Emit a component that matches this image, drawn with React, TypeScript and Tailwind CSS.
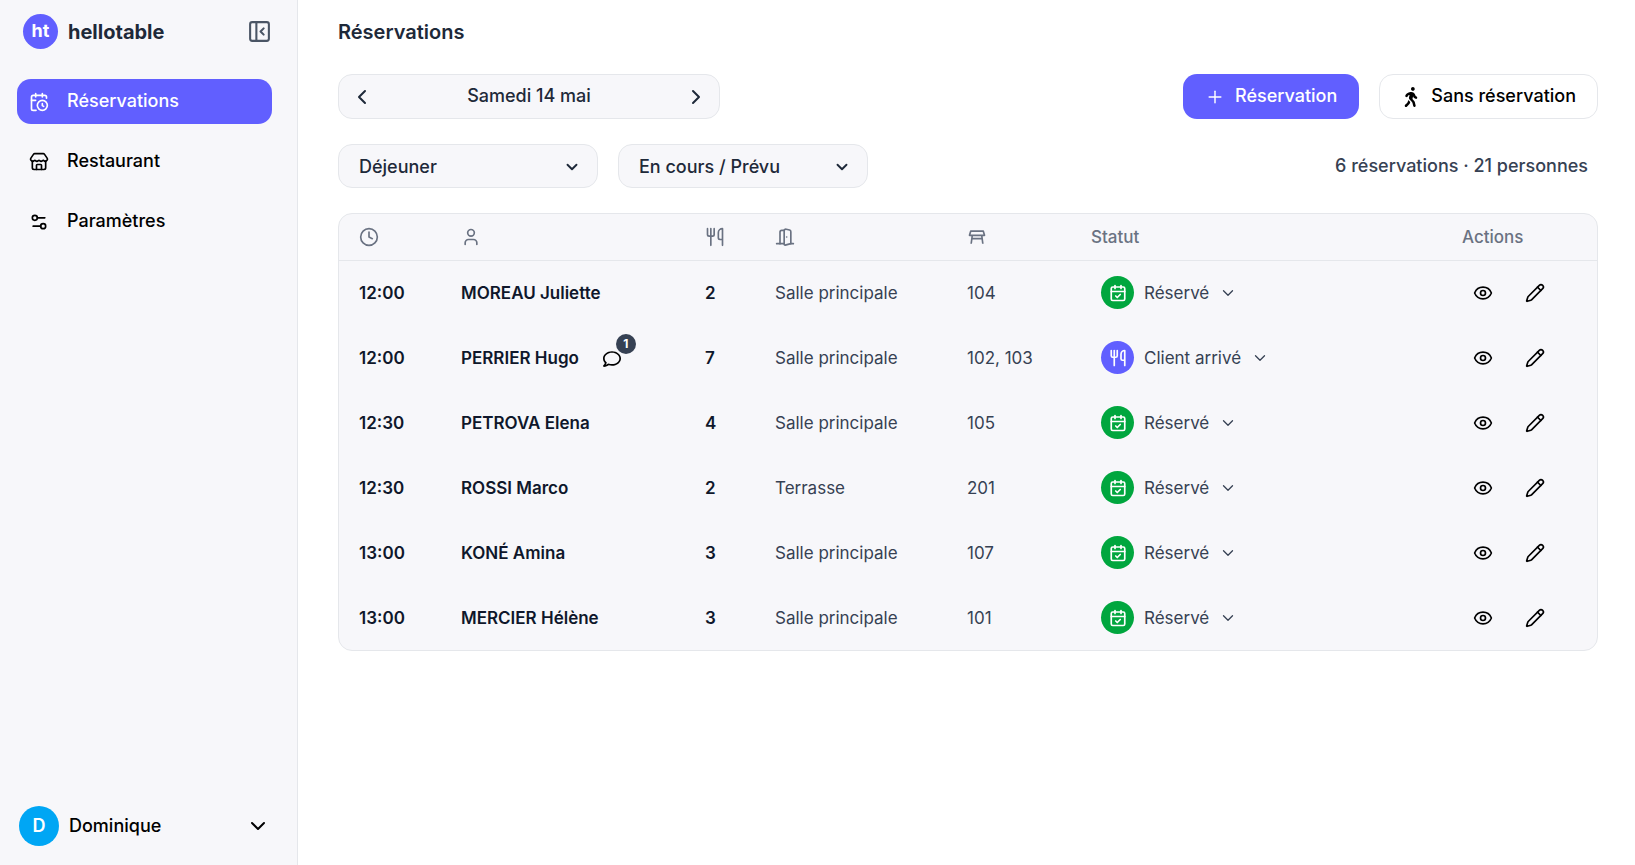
import { useState } from "react";
import {
  CalendarCheck,
  CalendarClock,
  ChevronDown,
  ChevronLeft,
  ChevronRight,
  Clock,
  DoorOpen,
  Eye,
  PanelLeftClose,
  Pencil,
  Plus,
  Settings2,
  Store,
  User,
  Utensils,
} from "lucide-react";
import { FaRegComment, FaWalking } from "react-icons/fa";
import { MdOutlineTableRestaurant } from "react-icons/md";

type Status = "reserved" | "arrived";

interface Reservation {
  id: number;
  time: string;
  name: string;
  guests: number;
  room: string;
  tables: string;
  status: Status;
  comments?: number;
}

const reservations: Reservation[] = [
  { id: 1, time: "12:00", name: "MOREAU Juliette", guests: 2, room: "Salle principale", tables: "104", status: "reserved" },
  { id: 2, time: "12:00", name: "PERRIER Hugo", guests: 7, room: "Salle principale", tables: "102, 103", status: "arrived", comments: 1 },
  { id: 3, time: "12:30", name: "PETROVA Elena", guests: 4, room: "Salle principale", tables: "105", status: "reserved" },
  { id: 4, time: "12:30", name: "ROSSI Marco", guests: 2, room: "Terrasse", tables: "201", status: "reserved" },
  { id: 5, time: "13:00", name: "KONÉ Amina", guests: 3, room: "Salle principale", tables: "107", status: "reserved" },
  { id: 6, time: "13:00", name: "MERCIER Hélène", guests: 3, room: "Salle principale", tables: "101", status: "reserved" },
];

const navItems = [
  { label: "Réservations", icon: CalendarClock },
  { label: "Restaurant", icon: Store },
  { label: "Paramètres", icon: Settings2 },
];

const statuses = {
  reserved: { label: "Réservé", icon: CalendarCheck, color: "bg-green-600" },
  arrived: { label: "Client arrivé", icon: Utensils, color: "bg-[#615fff]" },
};

function Sidebar() {
  const [active, setActive] = useState("Réservations");

  return (
    <aside className="flex w-[298px] shrink-0 flex-col border-r border-gray-200 bg-[#f7f7fa]">
      <div className="flex items-center pt-3.5 pr-[25px] pl-[23px]">
        <span className="flex size-[35px] items-center justify-center rounded-full bg-[#615fff] pb-0.5 text-lg font-bold text-white">
          ht
        </span>
        <span className="ml-2.5 text-xl font-bold text-gray-800">hellotable</span>
        <button type="button" aria-label="Réduire le menu" className="ml-auto text-gray-600">
          <PanelLeftClose size={25} />
        </button>
      </div>

      <nav className="mt-[30px] flex flex-col gap-[15px] pr-[25px] pl-[17px]">
        {navItems.map(({ label, icon: Icon }) => (
          <a
            key={label}
            href="#"
            onClick={() => setActive(label)}
            className={
              "flex h-[45px] items-center gap-[18px] rounded-[14px] px-3 text-lg font-medium " +
              (label === active ? "bg-[#615fff] text-white" : "text-black")
            }
          >
            <Icon size={20} />
            <span className="pb-0.5">{label}</span>
          </a>
        ))}
      </nav>

      <button type="button" className="mt-auto mb-[19px] flex items-center pr-[27px] pl-[19px] text-lg font-medium text-black">
        <span className="flex size-10 items-center justify-center rounded-full bg-sky-500 font-semibold text-white">D</span>
        <span className="ml-2.5">Dominique</span>
        <ChevronDown size={24} className="ml-auto" />
      </button>
    </aside>
  );
}

function FilterSelect({ label, options, width }: { label: string; options: string[]; width: string }) {
  return (
    <div className={"relative " + width}>
      <select
        aria-label={label}
        className="h-11 w-full appearance-none rounded-[14px] border border-gray-200 bg-[#f7f7fa] pt-0.5 pr-10 pl-5 text-lg font-medium text-gray-800"
      >
        {options.map((option) => (
          <option key={option}>{option}</option>
        ))}
      </select>
      <ChevronDown size={18} strokeWidth={2.5} className="pointer-events-none absolute top-3.5 right-[17px] text-gray-800" />
    </div>
  );
}

function StatusButton({ status }: { status: Status }) {
  const { label, icon: Icon, color } = statuses[status];

  return (
    <button type="button" className="flex items-center gap-2.5 pl-2.5">
      <span className={"flex size-[33px] items-center justify-center rounded-full text-white " + color}>
        <Icon size={18} strokeWidth={2.25} />
      </span>
      <span className="pt-0.5">{label}</span>
      <ChevronDown size={18} strokeWidth={1.75} />
    </button>
  );
}

function ReservationTable() {
  return (
    <div className="mt-[25px] overflow-hidden rounded-[14px] border border-gray-200 bg-[#f7f7fa]">
      <table className="w-full table-fixed text-left text-[17px] text-gray-700">
        <colgroup>
          <col className="w-[102px]" />
          <col className="w-[244px]" />
          <col className="w-[70px]" />
          <col className="w-[192px]" />
          <col className="w-[124px]" />
          <col />
          <col className="w-[155px]" />
        </colgroup>
        <thead>
          <tr className="h-[46px] border-b border-gray-200 text-gray-500 *:pl-5 *:font-medium">
            <th aria-label="Heure"><Clock size={20} /></th>
            <th aria-label="Client"><User size={20} /></th>
            <th aria-label="Couverts"><Utensils size={20} /></th>
            <th aria-label="Salle"><DoorOpen size={20} /></th>
            <th aria-label="Table"><MdOutlineTableRestaurant size={20} /></th>
            <th className="pt-0.5">Statut</th>
            <th className="pt-0.5">Actions</th>
          </tr>
        </thead>
        <tbody>
          {reservations.map((r) => (
            <tr key={r.id} className="h-[65px] *:pl-5">
              <td className="pt-0.5 font-semibold text-slate-900">{r.time}</td>
              <td className="pt-0.5 font-semibold text-slate-900">
                <div className="flex items-center gap-6">
                  {r.name}
                  {r.comments && (
                    <button type="button" aria-label="Commentaires" className="relative text-black">
                      <FaRegComment size={18} />
                      <span className="absolute -top-4 left-[13px] flex size-5 items-center justify-center rounded-full bg-gray-700 text-xs font-bold text-white">
                        {r.comments}
                      </span>
                    </button>
                  )}
                </div>
              </td>
              <td className="pt-0.5 font-semibold text-slate-900">{r.guests}</td>
              <td className="pt-0.5">{r.room}</td>
              <td className="pt-0.5">{r.tables}</td>
              <td>
                <StatusButton status={r.status} />
              </td>
              <td>
                <div className="flex gap-2.5 text-black">
                  <button type="button" aria-label={"Voir " + r.name} className="flex size-[42px] items-center justify-center">
                    <Eye size={20} />
                  </button>
                  <button type="button" aria-label={"Modifier " + r.name} className="flex size-[42px] items-center justify-center">
                    <Pencil size={20} />
                  </button>
                </div>
              </td>
            </tr>
          ))}
        </tbody>
      </table>
    </div>
  );
}

export default function App() {
  const total = reservations.reduce((sum, r) => sum + r.guests, 0);

  return (
    <div className="flex min-h-screen bg-white font-['Inter',sans-serif]">
      <Sidebar />

      <main className="min-w-0 flex-1 pt-[17px] pr-[37px] pl-10">
        <h1 className="text-xl leading-[30px] font-semibold text-gray-800">Réservations</h1>

        <div className="mt-[27px] flex items-center">
          <div className="flex h-[45px] w-[382px] items-center justify-between rounded-[14px] border border-gray-200 bg-[#f7f7fa] px-[11px] text-gray-800">
            <button type="button" aria-label="Jour précédent">
              <ChevronLeft size={24} />
            </button>
            <span className="pb-0.5 text-lg font-medium">Samedi 14 mai</span>
            <button type="button" aria-label="Jour suivant">
              <ChevronRight size={24} />
            </button>
          </div>

          <button type="button" className="ml-auto flex h-[45px] items-center gap-2.5 rounded-[14px] bg-[#615fff] px-[22px] text-lg font-medium text-white">
            <Plus size={20} strokeWidth={1.75} />
            <span className="pb-0.5">Réservation</span>
          </button>
          <button type="button" className="ml-5 flex h-[45px] items-center gap-2.5 rounded-[14px] border border-gray-200 px-[21px] text-lg font-medium text-black">
            <FaWalking size={20} />
            <span className="pb-0.5">Sans réservation</span>
          </button>
        </div>

        <div className="mt-[25px] flex items-center gap-5">
          <FilterSelect label="Service" options={["Déjeuner", "Dîner"]} width="w-[260px]" />
          <FilterSelect label="Statut" options={["En cours / Prévu", "Terminé"]} width="w-[250px]" />
          <p className="ml-auto pr-2.5 text-lg font-medium text-gray-700">
            {reservations.length} réservations · {total} personnes
          </p>
        </div>

        <ReservationTable />
      </main>
    </div>
  );
}
